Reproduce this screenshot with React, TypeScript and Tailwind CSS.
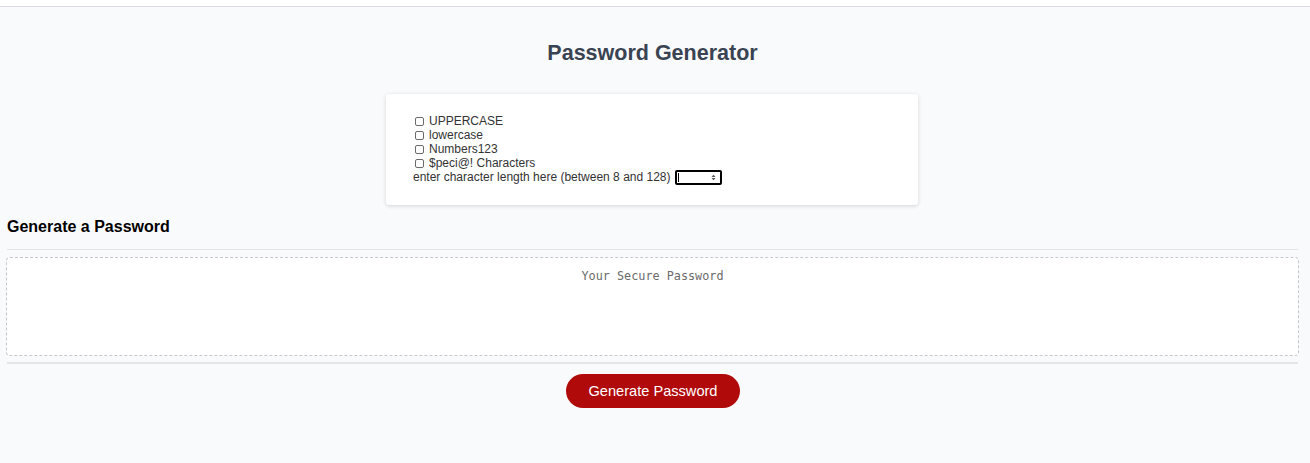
import React from "react";

const options = ["UPPERCASE", "lowercase", "Numbers123", "$peci@! Characters"];

export default function App() {
  return (
    <div className="w-[1310px] h-[463px] overflow-hidden bg-white font-['Liberation_Sans',Arial,sans-serif]">
      <div className="h-[6px] bg-white" />
      <div className="h-[457px] border-t border-[#d9dbe0] bg-[#f9fafb]">
        <div className="ml-[6px] w-[1293px] flex flex-col">
          <h1 className="mt-[33px] h-[26px] text-center text-[21.5px] leading-[26px] font-bold text-[#3a4352]">
            Password Generator
          </h1>
          <div className="mt-[28px] ml-[380px] w-[532px] h-[111px] bg-white rounded-[3px] shadow-[0_1px_4px_rgba(0,0,0,0.15)] pl-[27px] pt-[20px]">
            {options.map((o) => (
              <div key={o} className="h-[14px] flex items-center text-[12px] leading-[14px] text-[#333]">
                <span className="ml-[2px] mr-[5px] w-[9px] h-[9px] border border-[#6b6b6b] rounded-[2px] bg-white" />
                <span>{o}</span>
              </div>
            ))}
            <div className="h-[14px] flex items-center text-[12px] leading-[14px] text-[#333]">
              <span>enter character length here (between 8 and 128)</span>
              <span className="ml-[4px] w-[47px] h-[15px] border-2 border-black rounded-[2px] bg-white flex items-center justify-end pr-[4px] relative">
                <span className="absolute left-[1px] top-[1px] w-[1px] h-[9px] bg-black" />
                <svg width="5" height="7" viewBox="0 0 5 7">
                  <path d="M0.5 3 L2.5 0.8 L4.5 3 Z" fill="#555" />
                  <path d="M0.5 4 L2.5 6.2 L4.5 4 Z" fill="#555" />
                </svg>
              </span>
            </div>
          </div>
          <h2 className="mt-[13px] ml-[1px] h-[18px] text-[16px] leading-[18px] font-bold text-black">
            Generate a Password
          </h2>
          <div className="mt-[13px] mx-[1px] h-[1px] bg-[#e3e5e9]" />
          <div className="mt-[7px] h-[99px] bg-white border border-dashed border-[#c4c8ce] rounded-[4px] flex justify-center pt-[11px]">
            <span className="font-['DejaVu_Sans_Mono',monospace] text-[11.8px] leading-[15px] text-[#6b6b6b]">
              Your Secure Password
            </span>
          </div>
          <div className="mt-[6px] mx-[1px] h-[2px] bg-[#e3e5e9]" />
          <button className="mt-[10px] ml-[560px] w-[174px] h-[34px] rounded-full bg-[#b00a0a] text-white text-[14.6px] leading-[34px]">
            Generate Password
          </button>
        </div>
      </div>
    </div>
  );
}
